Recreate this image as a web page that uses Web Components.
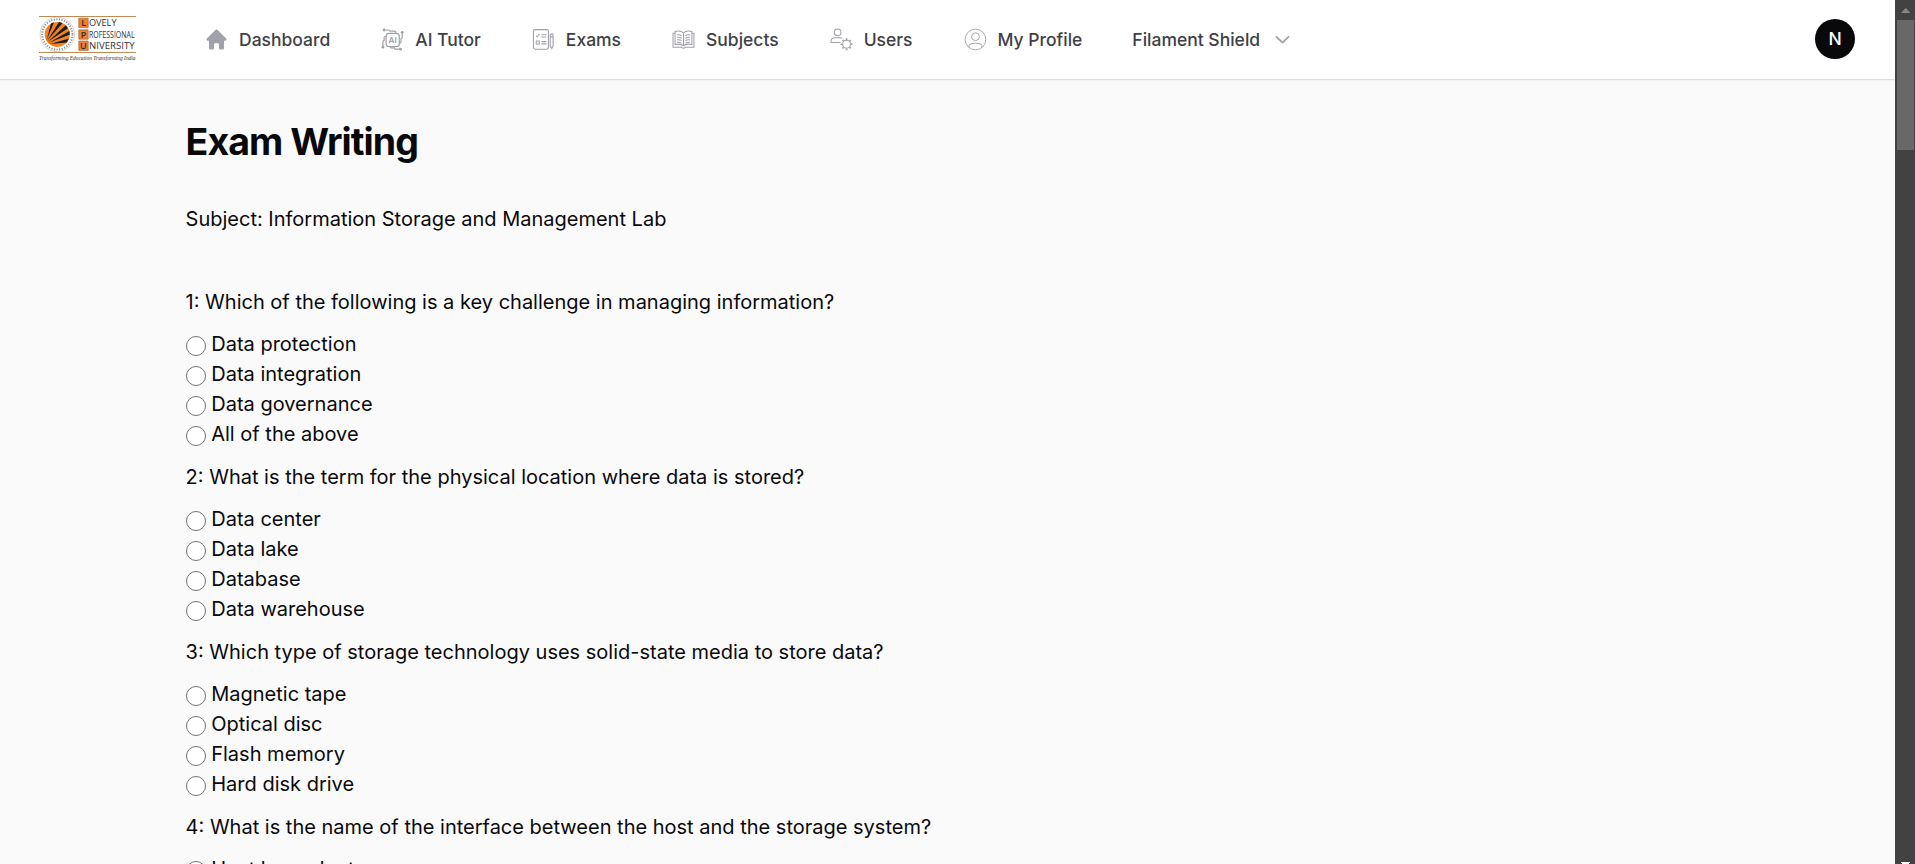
<!DOCTYPE html>
<html lang="en">
<head>
<meta charset="utf-8">
<title>Exam Writing</title>
<style>
html,body{margin:0;height:100%;overflow:hidden;background:#fafafa;font-family:Inter,"Liberation Sans",sans-serif;color:#09090b}
</style>
</head>
<body>
<app-shell>
  <top-bar slot="bar">
    <nav-item icon="home">Dashboard</nav-item>
    <nav-item icon="ai">AI Tutor</nav-item>
    <nav-item icon="exam">Exams</nav-item>
    <nav-item icon="book">Subjects</nav-item>
    <nav-item icon="users">Users</nav-item>
    <nav-item icon="profile">My Profile</nav-item>
    <nav-item trail="chevron">Filament Shield</nav-item>
    <user-avatar slot="user">N</user-avatar>
  </top-bar>
  <exam-page heading="Exam Writing" subject="Subject: Information Storage and Management Lab"></exam-page>
  <scroll-rail slot="rail"></scroll-rail>
</app-shell>
<script>
function define(name, html, setup) {
  const t = document.createElement('template');
  t.innerHTML = html;
  customElements.define(name, class extends HTMLElement {
    constructor() {
      super();
      this.attachShadow({mode: 'open'}).append(t.content.cloneNode(true));
      if (setup) setup(this, this.shadowRoot);
    }
  });
}

const icons = {
  home: '<path fill="#a1a1aa" fill-rule="evenodd" d="M9.293 2.293a1 1 0 0 1 1.414 0l7 7A1 1 0 0 1 17 11h-1v6a1 1 0 0 1-1 1h-2a1 1 0 0 1-1-1v-3a1 1 0 0 0-1-1H9a1 1 0 0 0-1 1v3a1 1 0 0 1-1 1H5a1 1 0 0 1-1-1v-6H3a1 1 0 0 1-.707-1.707l7-7Z"/>',
  ai: '<g stroke-width="1.1"><rect x="4.1" y="4.3" width="12.2" height="12.2" rx="2.6"/><path d="M2.4 1.2h4.2q1.1 0 1.1 1.1h4.2q1.3 0 1.3 2M19 3.8v4.4q0 1.1-1.1 1.1v3.2q0 1-1.6 1M17.2 19h-4.3q-1.1 0-1.1-1.2H8.9q-1.2 0-1.2-1.4M1.2 16.8v-5q0-1 1.1-1V8q0-1 1.8-1"/></g><g fill="#a1a1aa" stroke="none"><circle cx="2.2" cy="1.2" r="1.3"/><circle cx="19" cy="3.4" r="1.3"/><circle cx="17.5" cy="19" r="1.3"/><circle cx="1.2" cy="17.1" r="1.3"/><text x="10.2" y="13.1" font-size="7.6" font-weight="600" text-anchor="middle">AI</text></g>',
  exam: '<g stroke-width="1"><rect x=".7" y=".9" width="13.9" height="18.2" rx="1.8"/><path d="m3.2 6.5 1 1 2-2.4M8.1 5.6h4.7M8.1 7.7h4.7M8.1 12h4.7M8.1 14.1h4.7"/><rect x="3.3" y="11.5" width="2.8" height="2.8"/><path d="M16.3 6.2q0-1.4 1.3-1.4t1.3 1.4v9.7l-1.3 2.5-1.3-2.5ZM16.3 7.6h2.6"/></g>',
  book: '<g stroke-width=".95"><path d="M10 4C8.4 2.2 5.2 1.9 2.2 2.6v12.1c3-.7 6.2-.3 7.8 1.2 1.6-1.5 4.8-1.9 7.8-1.2V2.6c-3-.7-6.2-.4-7.8 1.4ZM10 4v11.9"/><path d="M2.2 4.2H.3v12.9h7.9q.4.9 1.8.9t1.8-.9h7.9V4.2h-1.9"/><path d="M4 5.7q2.2-.4 4.2.8M4 8q2.2-.4 4.2.8M4 10.3q2.2-.4 4.2.8M16 5.7q-2.2-.4-4.2.8M16 8q-2.2-.4-4.2.8M16 10.3q-2.2-.4-4.2.8M4 12.6q2.2-.4 4.2.8M16 12.6q-2.2-.4-4.2.8"/></g>',
  users: '<g stroke-width=".95"><circle cx="6.4" cy="3.4" r="3.1"/><path d="M9.2 12.8H.3v-1.2q.2-3.3 3.5-3.3h4.8q1.4 0 2.2.7"/><circle cx="14.7" cy="14.4" r="3.6"/><path stroke-width="1.5" d="M14.7 8.9v1.6M14.7 18.3v1.6M9.2 14.4h1.6M18.6 14.4h1.6M10.9 10.6l1.1 1.1M17.4 17.1l1.1 1.1M10.9 18.2l1.1-1.1M17.4 11.7l1.1-1.1"/></g>',
  profile: '<g stroke-width=".85"><circle cx="10" cy="10" r="9.6"/><circle cx="10" cy="7.4" r="3.6"/><path d="M4 17.3v-1.2q.2-2 2.8-2.3 3.2-.6 6.4 0 2.6.3 2.8 2.3v1.2"/></g>',
  chevron: '<path stroke="#a1a1aa" stroke-width="1.5" stroke-linecap="round" stroke-linejoin="round" d="m5.2 7.9 4.8 4.6 4.8-4.6"/>'
};

define('nav-item', `<style>
:host{display:flex;align-items:center;gap:10px;padding:10px 15px;font-size:17.5px;line-height:25px;font-weight:500;color:#3f3f46;white-space:nowrap}
svg{width:25px;height:25px;display:block;fill:none;stroke:#a1a1aa;overflow:visible}
svg.home{stroke:none}
svg.small{width:21.6px;height:21.6px;padding:1.7px}
</style><slot></slot>`, (el, root) => {
  const make = (n) => {
    const h = document.createElement('template');
    const small = n !== 'home' && n !== 'chevron';
    h.innerHTML = `<svg class="${n}${small ? ' small' : ''}" viewBox="0 0 20 20">${icons[n]}</svg>`;
    return h.content;
  };
  const slot = root.querySelector('slot');
  if (el.getAttribute('icon')) slot.before(make(el.getAttribute('icon')));
  if (el.getAttribute('trail')) slot.after(make(el.getAttribute('trail')));
});

define('user-avatar', `<style>
:host{display:flex;align-items:center;justify-content:center;width:40px;height:40px;border-radius:50%;background:#09090b;color:#fff;font-size:17.5px;font-weight:500;line-height:20px}
</style><slot></slot>`);

define('brand-logo', `<style>:host,svg{display:block;width:100px;height:50px;overflow:visible}</style>
<svg viewBox="38 13 100 50">
 <path d="M39 16.5h97M39 52.5h97" stroke="#c08a55" stroke-width="1"/>
 <circle cx="57.3" cy="34.4" r="15.2" fill="none" stroke="#8a8a8a" stroke-width="2" stroke-dasharray="1.1 1.5"/>
 <circle cx="57.3" cy="34.4" r="17.2" fill="none" stroke="#aaa" stroke-width=".5"/>
 <circle cx="57.3" cy="34.4" r="12.5" fill="#f58220"/>
 <g fill="#1b1b1b">
  <path d="M46.5 40.5 51 23.6 54 22.3Z"/><path d="M47 41 59 21.9 62.6 23.1Z"/><path d="M47.5 42 65.8 25.2 68 28.2Z"/><path d="M48.5 43 69.4 31 69.8 34.6Z"/><path d="M50 44 69 38.5 66.8 42.4Z"/>
 </g>
 <g fill="#f08030" stroke="#9a5a2c" stroke-width=".6"><path d="M78.8 18.2h9.4v9.4h-9.4zM78.8 29.8h9.4v9.4h-9.4zM78.8 41h9.4v9.4h-9.4z"/></g>
 <g font-family="Open Sans,sans-serif" font-size="9" fill="#3a2a20">
  <text x="81.2" y="26.2" font-weight="600">L</text><text x="80.8" y="37.8" font-weight="600">P</text><text x="80.1" y="49" font-weight="600">U</text>
  <g fill="#333"><text x="89" y="26.2" textLength="27.5" lengthAdjust="spacingAndGlyphs">OVELY</text>
  <text x="89" y="37.8" textLength="45.6" lengthAdjust="spacingAndGlyphs">ROFESSIONAL</text>
  <text x="89" y="49" textLength="45.6" lengthAdjust="spacingAndGlyphs">NIVERSITY</text></g>
 </g>
 <text x="39" y="59.5" font-family="Liberation Serif,serif" font-style="italic" font-size="6" fill="#333" textLength="96.5" lengthAdjust="spacingAndGlyphs">Transforming Education Transforming India</text>
</svg>`);

define('top-bar', `<style>
:host{display:flex;align-items:center;box-sizing:border-box;height:79px;padding:0 40px 1px 38px;background:#fff;box-shadow:0 0 0 1px rgba(9,9,11,.07),0 1px 2px rgba(0,0,0,.08);position:relative}
brand-logo{margin-top:-2px}
nav{display:flex;gap:20px;margin-left:51px;flex:1;padding-top:1px}
</style><brand-logo></brand-logo><nav><slot></slot></nav><slot name="user"></slot>`);

define('answer-option', `<style>
:host{display:block;height:30px;font-size:20px;line-height:30px;white-space:nowrap}
input{appearance:none;box-sizing:border-box;width:20px;height:20px;margin:0;border:1px solid #71717a;border-radius:50%;background:#fff;vertical-align:middle}
input:checked{border:6px solid #18181b}
</style><label><input type="radio"> <slot></slot></label>`);

define('exam-question', `<style>
:host{display:block;font-size:20px;line-height:30px}
p{margin:0 0 12.5px}
div{padding-bottom:12.5px}
</style><p><slot name="q"></slot></p><div><slot></slot></div>`);

const questions = [
  ['1: Which of the following is a key challenge in managing information?', 'Data protection', 'Data integration', 'Data governance', 'All of the above'],
  ['2: What is the term for the physical location where data is stored?', 'Data center', 'Data lake', 'Database', 'Data warehouse'],
  ['3: Which type of storage technology uses solid-state media to store data?', 'Magnetic tape', 'Optical disc', 'Flash memory', 'Hard disk drive'],
  ['4: What is the name of the interface between the host and the storage system?', 'Host bus adapter']
];

define('exam-page', `<style>
:host{display:block;padding:39.5px 0 0 185.6px}
h1{margin:0 0 40px;font-size:37.5px;line-height:45px;font-weight:700;letter-spacing:-.025em}
p{margin:0 0 53px;font-size:20px;line-height:30px}
</style><h1></h1><p></p><section></section>`, (el, root) => {
  root.querySelector('h1').textContent = el.getAttribute('heading');
  root.querySelector('p').textContent = el.getAttribute('subject');
  root.querySelector('section').innerHTML = questions.map(([q, ...a]) =>
    `<exam-question><span slot="q">${q}</span>${a.map(o => `<answer-option>${o}</answer-option>`).join('')}</exam-question>`).join('');
});

define('scroll-rail', `<style>
:host{display:flex;flex-direction:column;align-items:center;width:20px;height:100%;background:#424242}
svg{display:block;width:20px;height:20px;flex:none}
i{display:block;width:17px;height:130px;background:#686868}
b{flex:1}
</style><svg viewBox="0 0 20 20"><path fill="#868686" d="M6 13h9.4L10.7 8z"/></svg><i></i><b></b><svg style="height:2px" viewBox="0 0 20 2"><path fill="#fff" d="M6 0h9v1h-1v1H7V1H6z"/></svg>`);

define('app-shell', `<style>
:host{display:grid;grid-template-columns:minmax(0,1fr) 20px;height:864px;overflow:hidden}
main{overflow:hidden;height:864px}
</style><main><slot name="bar"></slot><slot></slot></main><slot name="rail"></slot>`);
</script>
</body>
</html>
